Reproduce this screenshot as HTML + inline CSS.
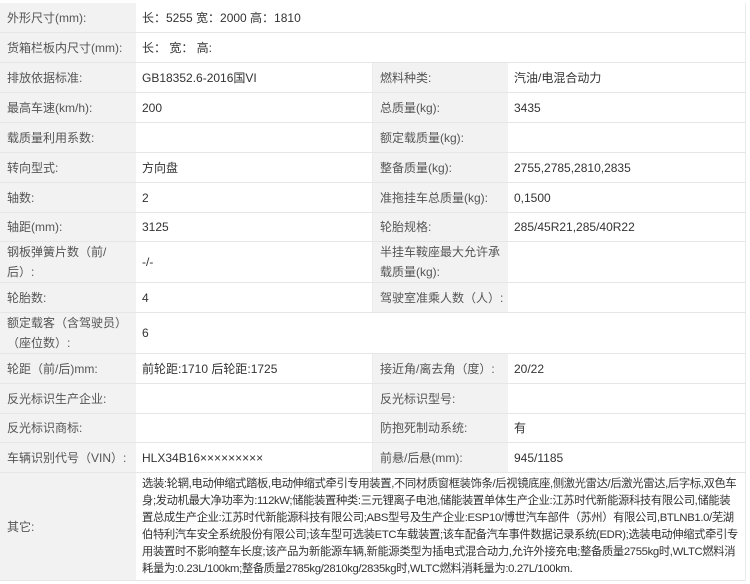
<!DOCTYPE html>
<html><head><meta charset="utf-8"><style>
body{margin:0;width:750px;height:584px;background:#fff;position:relative;overflow:hidden;font-family:"Liberation Sans","Microsoft YaHei","Noto Sans CJK SC",sans-serif;font-size:12px;color:#333}
.c{position:absolute;box-sizing:border-box;display:flex;align-items:center;border-bottom:1px solid #e6e6e6;line-height:20px}
.l{background:#f2f2f2;color:#555;padding-left:7px;padding-right:4px}
.v{background:#fff;padding-left:6px;border-right:1px solid #ececec}
.c span{display:block}
</style></head><body>
<div id="t"></div>
<script>
var rows=[
[3,33,"外形尺寸(mm):","长：5255 宽：2000 高：1810"],
[33,63,"货箱栏板内尺寸(mm):","长： 宽： 高:"],
[63,93,"排放依据标准:","GB18352.6-2016国VI","燃料种类:","汽油/电混合动力"],
[93,123,"最高车速(km/h):","200","总质量(kg):","3435"],
[123,153,"载质量利用系数:","","额定载质量(kg):",""],
[153,183,"转向型式:","方向盘","整备质量(kg):","2755,2785,2810,2835"],
[183,213,"轴数:","2","准拖挂车总质量(kg):","0,1500"],
[213,242,"轴距(mm):","3125","轮胎规格:","285/45R21,285/40R22"],
[242,283,"钢板弹簧片数（前/后）:","-/-","半挂车鞍座最大允许承载质量(kg):",""],
[283,313,"轮胎数:","4","驾驶室准乘人数（人）:",""],
[313,354,"额定载客（含驾驶员）（座位数）:","6"],
[354,384,"轮距（前/后)mm:","前轮距:1710 后轮距:1725","接近角/离去角（度）:","20/22"],
[384,414,"反光标识生产企业:","","反光标识型号:",""],
[414,443,"反光标识商标:","","防抱死制动系统:","有"],
[443,473,"车辆识别代号（VIN）:","HLX34B16×××××××××","前悬/后悬(mm):","945/1185"],
[473,581,"其它:","选装:轮辋,电动伸缩式踏板,电动伸缩式牵引专用装置,不同材质窗框装饰条/后视镜底座,侧激光雷达/后激光雷达,后字标,双色车<br>身;发动机最大净功率为:112kW;储能装置种类:三元锂离子电池,储能装置单体生产企业:江苏时代新能源科技有限公司,储能装<br>置总成生产企业:江苏时代新能源科技有限公司;ABS型号及生产企业:ESP10/博世汽车部件（苏州）有限公司,BTLNB1.0/芜湖<br>伯特利汽车安全系统股份有限公司;该车型可选装ETC车载装置;该车配备汽车事件数据记录系统(EDR);选装电动伸缩式牵引专<br>用装置时不影响整车长度;该产品为新能源车辆,新能源类型为插电式混合动力,允许外接充电;整备质量2755kg时,WLTC燃料消<br>耗量为:0.23L/100km;整备质量2785kg/2810kg/2835kg时,WLTC燃料消耗量为:0.27L/100km."]
];
var h="";
rows.forEach(function(r){
var t=r[0],ht=r[1]-r[0];
h+='<div class="c l" style="left:0;top:'+t+'px;width:136px;height:'+ht+'px">'+r[2]+'</div>';
if(r.length==6){
h+='<div class="c v" style="left:136px;top:'+t+'px;width:237px;height:'+ht+'px">'+r[3]+'</div>';
h+='<div class="c l" style="left:373px;top:'+t+'px;width:135px;height:'+ht+'px">'+r[4]+'</div>';
h+='<div class="c v" style="left:508px;top:'+t+'px;width:238px;height:'+ht+'px">'+r[5]+'</div>';
}else{
var lh=r[3].length>100?'line-height:17px;font-size:11.3px;letter-spacing:-0.35px;white-space:nowrap;overflow:hidden;':'';
h+='<div class="c v" style="left:136px;top:'+t+'px;width:610px;height:'+ht+'px;'+lh+'"><span>'+r[3]+'</span></div>';
}
});
document.getElementById("t").innerHTML=h;
</script>
</body></html>
